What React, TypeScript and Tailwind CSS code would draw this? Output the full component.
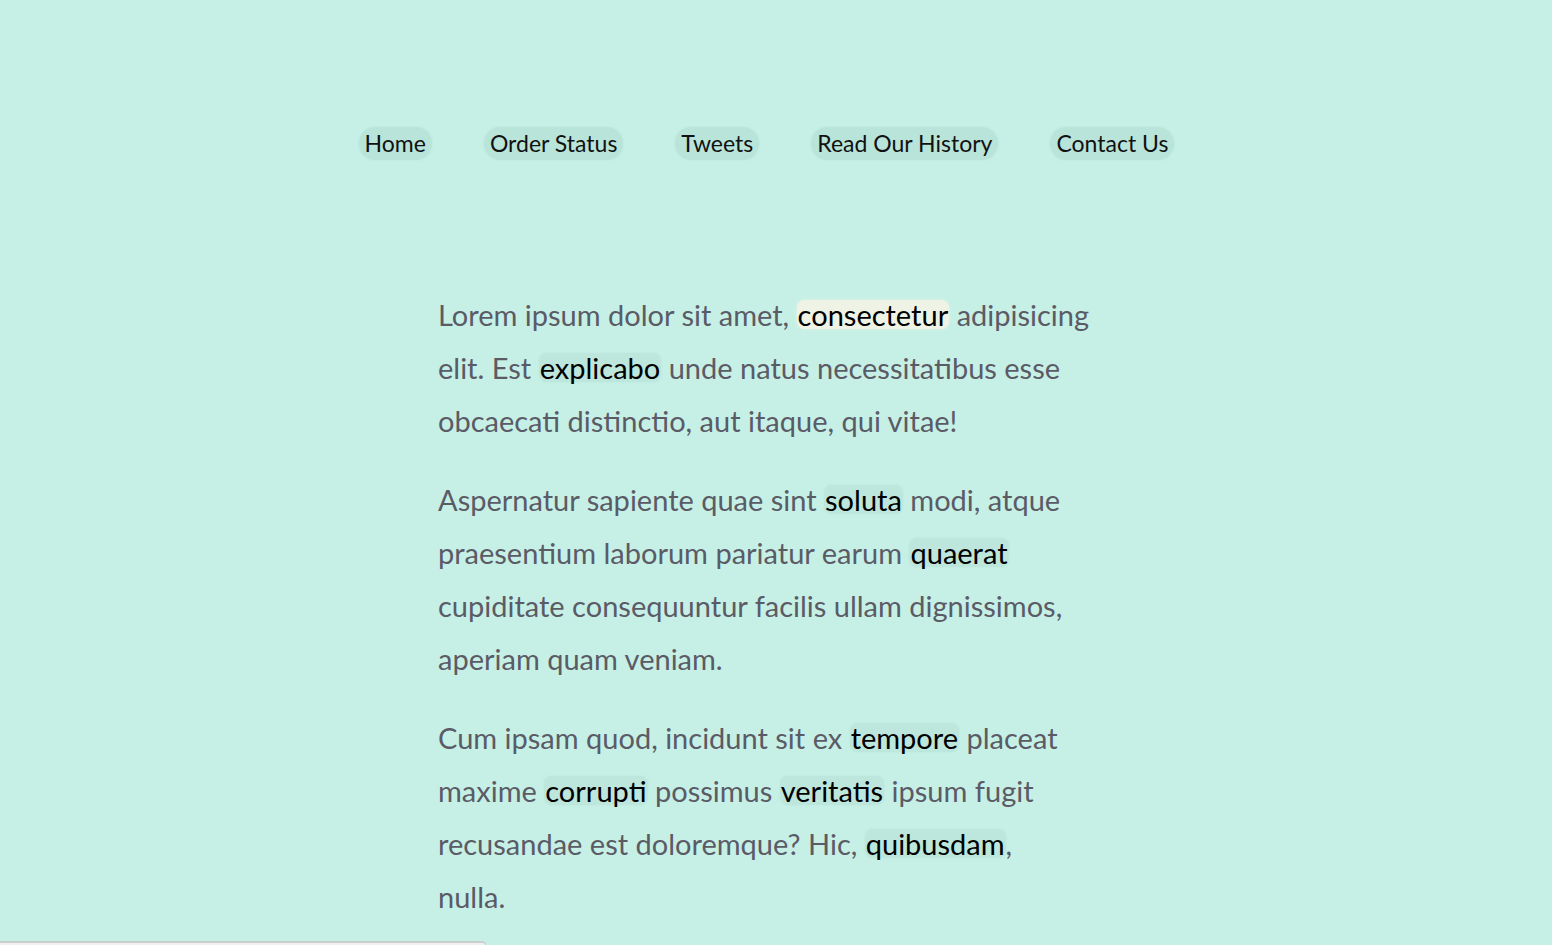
import React from 'react';

const NAV = ['Home', 'Order Status', 'Tweets', 'Read Our History', 'Contact Us'];

type Piece = string | { hl: string; light?: boolean };

const PARAGRAPHS: Piece[][][] = [
  [
    ['Lorem ipsum dolor sit amet, ', { hl: 'consectetur', light: true }, ' adipisicing'],
    ['elit. Est ', { hl: 'explicabo' }, ' unde natus necessitatibus esse'],
    ['obcaecati distinctio, aut itaque, qui vitae!'],
  ],
  [
    ['Aspernatur sapiente quae sint ', { hl: 'soluta' }, ' modi, atque'],
    ['praesentium laborum pariatur earum ', { hl: 'quaerat' }],
    ['cupiditate consequuntur facilis ullam dignissimos,'],
    ['aperiam quam veniam.'],
  ],
  [
    ['Cum ipsam quod, incidunt sit ex ', { hl: 'tempore' }, ' placeat'],
    ['maxime ', { hl: 'corrupti' }, ' possimus ', { hl: 'veritatis' }, ' ipsum fugit'],
    ['recusandae est doloremque? Hic, ', { hl: 'quibusdam' }, ','],
    ['nulla.'],
  ],
];

const App: React.FC = () => {
  return (
    <div className="relative h-[945px] overflow-hidden bg-[#c6f0e6] font-['Lato','Open_Sans',sans-serif]">
      {/* Nav */}
      <nav className="flex justify-center gap-[52px] pt-[127px] pr-[19px]">
        {NAV.map((item) => (
          <a
            key={item}
            href="#"
            className="px-[6px] h-[33px] flex items-center rounded-full bg-[#b9e4d9] text-[23px] text-[#111] shadow-[0_0_3px_#b9e4d9]"
          >
            {item}
          </a>
        ))}
      </nav>

      {/* Copy */}
      <main className="mx-auto w-[676px] pt-[128px] flex flex-col gap-[26px]">
        {PARAGRAPHS.map((lines, i) => (
          <p key={i} className="text-[29px] leading-[53px] text-[#5b5b66]">
            {lines.map((line, j) => (
              <span key={j} className="block whitespace-nowrap">
                {line.map((piece, k) =>
                  typeof piece === 'string' ? (
                    <React.Fragment key={k}>{piece}</React.Fragment>
                  ) : (
                    <span
                      key={k}
                      className={`inline-block leading-[29px] rounded-lg px-[1px] text-black ${
                        piece.light
                          ? 'bg-[#eef3e6] shadow-[0_0_3px_#eef3e6]'
                          : 'bg-[#bde6dc] shadow-[0_0_3px_#bde6dc]'
                      }`}
                    >
                      {piece.hl}
                    </span>
                  )
                )}
              </span>
            ))}
          </p>
        ))}
      </main>

      {/* bottom panel peeking in */}
      <div className="absolute left-0 top-[941px] w-[486px] h-[20px] rounded-tr-[4px] border-t-2 border-r border-[#c9cfcc] bg-[#f0f0f0]" />
    </div>
  );
};

export default App;
